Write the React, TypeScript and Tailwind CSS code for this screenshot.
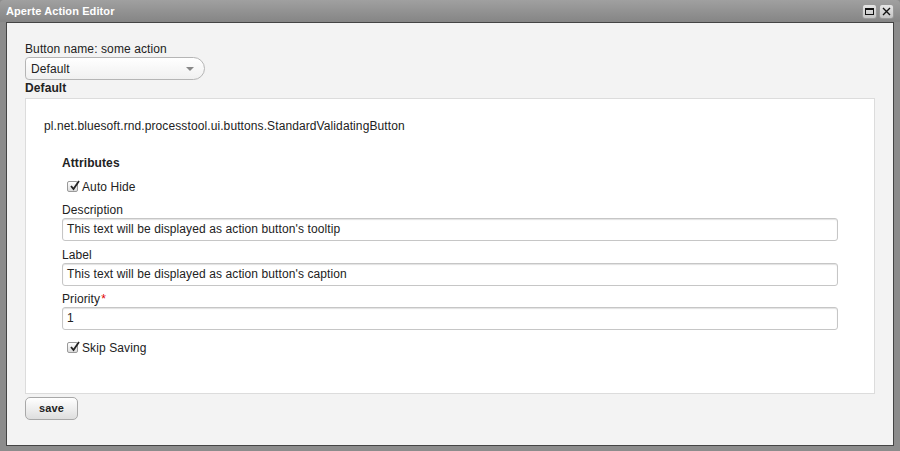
import React from 'react';

const Check = () => (
    <span className="inline-flex items-center justify-center w-[11px] h-[11px] border border-[#9a9a9a] rounded-[2px] bg-gradient-to-b from-white to-[#dcdcdc] mr-[4px] relative">
        <svg width="11" height="11" viewBox="0 0 11 11" className="absolute left-[1px] top-[-2px]">
            <path d="M2 6 L4.5 9 L10 1" stroke="#222" strokeWidth="1.8" fill="none" />
        </svg>
    </span>
);

const Field = ({ label, value, required, gap }: { label: string; value: string; required?: boolean; gap: string }) => (
    <div className={gap}>
        <div className="h-[15px] leading-[15px]">
            {label}
            {required && <span className="text-[#e00000] ml-[1px]">*</span>}
        </div>
        <div className="h-[23px] w-[776px] border border-[#c6c6c6] rounded-[3px] bg-white px-[4px] leading-[21px] shadow-[inset_0_1px_1px_rgba(0,0,0,0.12)]">
            {value}
        </div>
    </div>
);

export default function App() {
    return (
        <div className="w-[900px] h-[451px] bg-[#8c8c8c] flex flex-col font-['Liberation_Sans',Arial,sans-serif] text-[12px] text-[#222]">
            <div className="h-[22px] flex items-center justify-between bg-gradient-to-b from-[#a0a0a0] to-[#858585] rounded-t-[4px] pl-[6px] pr-[6px]">
                <span className="text-white font-bold text-[11px] tracking-[0.1px]">Aperte Action Editor</span>
                <div className="flex gap-[2px] pt-[1px]">
                    <div className="w-[15px] h-[15px] rounded-[3px] bg-gradient-to-b from-[#e6e6e6] to-[#c4c4c4] border border-[#9a9a9a] flex items-center justify-center">
                        <div className="w-[9px] h-[7px] border border-[#111] border-t-[2px]" />
                    </div>
                    <div className="w-[15px] h-[15px] rounded-[3px] bg-gradient-to-b from-[#e6e6e6] to-[#c4c4c4] border border-[#9a9a9a] flex items-center justify-center">
                        <svg width="9" height="9" viewBox="0 0 9 9">
                            <path d="M1 1 L8 8 M8 1 L1 8" stroke="#111" strokeWidth="1.4" />
                        </svg>
                    </div>
                </div>
            </div>
            <div className="flex-1 mx-[6px] mb-[5px] bg-[#f3f3f3] border border-[#444] pl-[18px] pr-[18px] pt-[19px] tracking-[0.1px]">
                <div className="h-[15px] leading-[15px]">Button name: some action</div>
                <div className="w-[180px] h-[23px] border border-[#b5b5b5] rounded-l-[4px] rounded-r-[12px] bg-gradient-to-b from-white to-[#f0f0f0] flex items-center justify-between pl-[5px] pr-[10px]">
                    <span>Default</span>
                    <span className="w-0 h-0 border-l-[4px] border-r-[4px] border-t-[4px] border-l-transparent border-r-transparent border-t-[#888]" />
                </div>
                <div className="font-bold h-[16px] leading-[16px]">Default</div>
                <div className="mt-[2px] h-[296px] bg-white border border-[#dcdcdc] pl-[18px] pt-[20px]">
                    <div className="h-[15px] leading-[15px]">pl.net.bluesoft.rnd.processtool.ui.buttons.StandardValidatingButton</div>
                    <div className="pl-[18px] pt-[22px]">
                        <div className="font-bold h-[15px] leading-[15px]">Attributes</div>
                        <div className="flex items-center h-[15px] mt-[8px] pl-[5px]">
                            <Check />
                            <span>Auto Hide</span>
                        </div>
                        <Field gap="mt-[9px]" label="Description" value="This text will be displayed as action button's tooltip" />
                        <Field gap="mt-[7px]" label="Label" value="This text will be displayed as action button's caption" />
                        <Field gap="mt-[6px]" label="Priority" value="1" required />
                        <div className="flex items-center h-[15px] mt-[10px] pl-[5px]">
                            <Check />
                            <span>Skip Saving</span>
                        </div>
                    </div>
                </div>
                <button className="mt-[3px] w-[53px] h-[23px] border border-[#a8a8a8] rounded-[5px] bg-gradient-to-b from-white to-[#dedede] font-bold text-[11px] text-[#222]">
                    save
                </button>
            </div>
        </div>
    );
}
